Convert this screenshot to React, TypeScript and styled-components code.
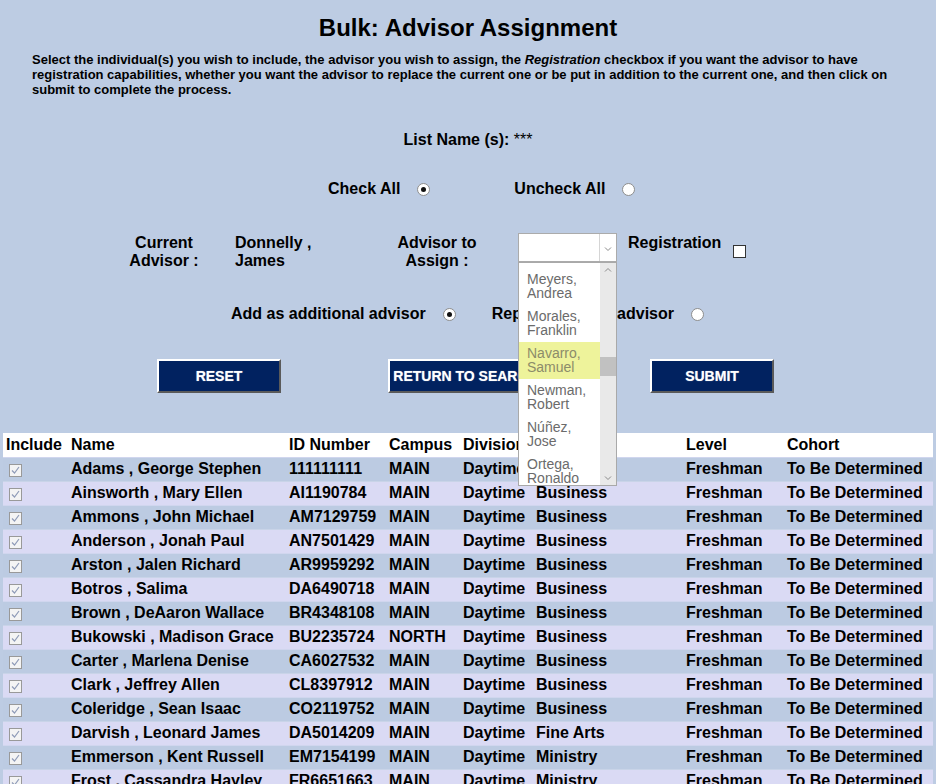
import styled, { createGlobalStyle } from "styled-components";

type Student = {
  name: string;
  id: string;
  campus: string;
  division: string;
  major: string;
  level: string;
  cohort: string;
};

const students: Student[] = [
  ["Adams , George Stephen", "111111111", "MAIN", "Business"],
  ["Ainsworth , Mary Ellen", "AI1190784", "MAIN", "Business"],
  ["Ammons , John Michael", "AM7129759", "MAIN", "Business"],
  ["Anderson , Jonah Paul", "AN7501429", "MAIN", "Business"],
  ["Arston , Jalen Richard", "AR9959292", "MAIN", "Business"],
  ["Botros , Salima", "DA6490718", "MAIN", "Business"],
  ["Brown , DeAaron Wallace", "BR4348108", "MAIN", "Business"],
  ["Bukowski , Madison Grace", "BU2235724", "NORTH", "Business"],
  ["Carter , Marlena Denise", "CA6027532", "MAIN", "Business"],
  ["Clark , Jeffrey Allen", "CL8397912", "MAIN", "Business"],
  ["Coleridge , Sean Isaac", "CO2119752", "MAIN", "Business"],
  ["Darvish , Leonard James", "DA5014209", "MAIN", "Fine Arts"],
  ["Emmerson , Kent Russell", "EM7154199", "MAIN", "Ministry"],
  ["Frost , Cassandra Hayley", "FR6651663", "MAIN", "Ministry"],
].map(([name, id, campus, major]) => ({
  name,
  id,
  campus,
  division: "Daytime",
  major,
  level: "Freshman",
  cohort: "To Be Determined",
}));

const advisors = [
  ["Meyers,", "Andrea"],
  ["Morales,", "Franklin"],
  ["Navarro,", "Samuel"],
  ["Newman,", "Robert"],
  ["Núñez,", "Jose"],
  ["Ortega,", "Ronaldo"],
];

const columns = [
  { label: "Include", width: 65 },
  { label: "Name", width: 218 },
  { label: "ID Number", width: 100 },
  { label: "Campus", width: 74 },
  { label: "Division", width: 73 },
  { label: "Major", width: 150 },
  { label: "Level", width: 101 },
  { label: "Cohort", width: 149 },
];

const GlobalStyle = createGlobalStyle`
  body {
    margin: 0;
    background: #bdcce3;
    font-family: "Liberation Sans", Arial, sans-serif;
    color: #000;
  }
`;

const Page = styled.div`
  width: 936px;
  overflow: hidden;
  padding-top: 14px;
`;

const Title = styled.h1`
  margin: 0;
  font-size: 24px;
  line-height: 28px;
  text-align: center;
`;

const Intro = styled.p`
  margin: 10px 0 0 32px;
  font-size: 13px;
  font-weight: bold;
  line-height: 15px;
  white-space: nowrap;

  em {
    font-style: italic;
  }
`;

const ListName = styled.div`
  margin-top: 34px;
  text-align: center;
  font-size: 16px;
  font-weight: bold;
  line-height: 18px;

  span {
    font-weight: normal;
  }
`;

const ChoiceRow = styled.div<{ $left: number; $gap: number; $top: number }>`
  display: flex;
  align-items: center;
  margin-top: ${(p) => p.$top}px;
  padding-left: ${(p) => p.$left}px;
  gap: ${(p) => p.$gap}px;
  height: 18px;
`;

const Choice = styled.label`
  display: flex;
  align-items: center;
  gap: 17px;
  font-size: 16px;
  font-weight: bold;
  white-space: nowrap;
`;

const Radio = styled.span<{ $on?: boolean }>`
  width: 11px;
  height: 11px;
  border: 1px solid #8d8d8d;
  border-radius: 50%;
  background: #fff;
  display: inline-flex;
  align-items: center;
  justify-content: center;

  &::after {
    content: "";
    width: 5px;
    height: 5px;
    border-radius: 50%;
    background: ${(p) => (p.$on ? "#111" : "transparent")};
  }
`;

const AdvisorRow = styled.div`
  display: flex;
  align-items: flex-start;
  margin-top: 36px;
  padding-left: 114px;
  font-size: 16px;
  font-weight: bold;
  line-height: 18px;
`;

const Cell = styled.div<{ $w: number; $center?: boolean; $ml?: number }>`
  width: ${(p) => p.$w}px;
  margin-left: ${(p) => p.$ml ?? 0}px;
  text-align: ${(p) => (p.$center ? "center" : "left")};
`;

const SelectWrap = styled.div`
  position: relative;
  margin-left: 24px;
  margin-top: -1px;
  width: 99px;
  z-index: 5;
`;

const SelectBox = styled.div`
  height: 27px;
  border: 1px solid #ababab;
  background: #fff;
  display: flex;
  justify-content: flex-end;
`;

const SelectArrow = styled.div`
  width: 16px;
  border-left: 1px solid #d5d5d5;
  display: flex;
  align-items: center;
  justify-content: center;
  padding-top: 4px;
`;

const OptionList = styled.div`
  position: absolute;
  top: 29px;
  left: 0;
  width: 97px;
  height: 222px;
  border: 1px solid #a9a9a9;
  background: #fff;
  display: flex;
  overflow: hidden;
`;

const Options = styled.div`
  flex: 1;
  padding-top: 5px;
`;

const OptionItem = styled.div<{ $active?: boolean }>`
  height: 37px;
  box-sizing: border-box;
  padding: 4px 0 0 8px;
  font-size: 14px;
  font-weight: normal;
  line-height: 14px;
  color: ${(p) => (p.$active ? "#8c8c6a" : "#6b6b6b")};
  background: ${(p) => (p.$active ? "#eef39b" : "transparent")};
`;

const ScrollTrack = styled.div`
  width: 16px;
  background: #e9e9e9;
  position: relative;
  display: flex;
  flex-direction: column;
  justify-content: space-between;
  align-items: center;
  padding: 4px 0;
  box-sizing: border-box;
`;

const ScrollThumb = styled.div`
  position: absolute;
  left: 0;
  right: 0;
  top: 94px;
  height: 19px;
  background: #c1c1c1;
`;

const RegCheck = styled.span`
  width: 11px;
  height: 11px;
  border: 1px solid #333;
  background: #fff;
  margin: 11px 0 0 13px;
`;

const ButtonRow = styled.div`
  display: flex;
  gap: 107px;
  padding-left: 157px;
  margin-top: 36px;
`;

const NavyButton = styled.button<{ $w: number }>`
  width: ${(p) => p.$w}px;
  height: 34px;
  background: #012260;
  color: #fff;
  font-family: "Liberation Sans", Arial, sans-serif;
  font-size: 14px;
  font-weight: bold;
  border: 2px solid;
  border-color: #fff #5a5a5a #5a5a5a #fff;
  text-shadow: 0 0 1px rgba(255, 255, 255, 0.6);
  padding: 0;
  white-space: nowrap;
`;

const Table = styled.table`
  margin: 40px 0 0 3px;
  border-collapse: collapse;
  table-layout: fixed;
  width: 930px;
  font-size: 16px;
  font-weight: bold;
`;

const HeadCell = styled.th`
  background: #fff;
  text-align: left;
  height: 24px;
  padding: 0 0 0 3px;
  font-weight: bold;
  white-space: nowrap;
  overflow: hidden;
`;

const Row = styled.tr<{ $alt: boolean }>`
  background: ${(p) => (p.$alt ? "#dadaf4" : "#bccbe2")};
  border-top: 1px solid ${(p) => (p.$alt ? "#c9d4e8" : "#d0d6ee")};
`;

const DataCell = styled.td`
  height: 21px;
  padding: 0 0 2px 3px;
  white-space: nowrap;
  overflow: hidden;
`;

const TickBox = styled.span`
  display: inline-flex;
  align-items: center;
  justify-content: center;
  width: 11px;
  height: 11px;
  margin: 4px 0 0 3px;
  border: 1px solid #999;
  background: #f4f4f4;
  vertical-align: top;
`;

const Chevron = ({ up }: { up?: boolean }) => (
  <svg width="8" height="5" viewBox="0 0 8 5">
    <path
      d={up ? "M1 4.5 L4 1.5 L7 4.5" : "M1 0.5 L4 3.5 L7 0.5"}
      fill="none"
      stroke="#8a8a8a"
      strokeWidth="1"
    />
  </svg>
);

const Tick = () => (
  <svg width="9" height="8" viewBox="0 0 9 8">
    <path d="M1 4.5 L3.5 7 L8 1" fill="none" stroke="#8f9bb8" strokeWidth="1.2" />
  </svg>
);

export default function App() {
  return (
    <Page>
      <GlobalStyle />
      <Title>Bulk: Advisor Assignment</Title>
      <Intro>
        Select the individual(s) you wish to include, the advisor you wish to assign, the{" "}
        <em>Registration</em> checkbox if you want the advisor to have
        <br />
        registration capabilities, whether you want the advisor to replace the current one or
        be put in addition to the current one, and then click on
        <br />
        submit to complete the process.
      </Intro>

      <ListName>
        List Name (s): <span>***</span>
      </ListName>

      <ChoiceRow $left={328} $gap={84} $top={31}>
        <Choice>
          Check All <Radio $on />
        </Choice>
        <Choice>
          Uncheck All <Radio />
        </Choice>
      </ChoiceRow>

      <AdvisorRow>
        <Cell $w={100} $center>
          Current
          <br />
          Advisor :
        </Cell>
        <Cell $w={145} $ml={21}>
          Donnelly ,
          <br />
          James
        </Cell>
        <Cell $w={114} $center>
          Advisor to
          <br />
          Assign :
        </Cell>
        <SelectWrap>
          <SelectBox>
            <SelectArrow>
              <Chevron />
            </SelectArrow>
          </SelectBox>
          <OptionList>
            <Options>
              {advisors.map(([last, first]) => (
                <OptionItem key={last} $active={last === "Navarro,"}>
                  {last}
                  <br />
                  {first}
                </OptionItem>
              ))}
            </Options>
            <ScrollTrack>
              <Chevron up />
              <ScrollThumb />
              <Chevron />
            </ScrollTrack>
          </OptionList>
        </SelectWrap>
        <Cell $w={92} $ml={11}>
          Registration
        </Cell>
        <RegCheck />
      </AdvisorRow>

      <ChoiceRow $left={231} $gap={36} $top={35}>
        <Choice>
          Add as additional advisor <Radio $on />
        </Choice>
        <Choice>
          Replace current advisor <Radio />
        </Choice>
      </ChoiceRow>

      <ButtonRow>
        <NavyButton $w={124}>RESET</NavyButton>
        <NavyButton $w={155}>RETURN TO SEARCH</NavyButton>
        <NavyButton $w={124}>SUBMIT</NavyButton>
      </ButtonRow>

      <Table>
        <colgroup>
          {columns.map((c) => (
            <col key={c.label} style={{ width: c.width }} />
          ))}
        </colgroup>
        <thead>
          <tr>
            {columns.map((c) => (
              <HeadCell key={c.label}>{c.label}</HeadCell>
            ))}
          </tr>
        </thead>
        <tbody>
          {students.map((s, i) => (
            <Row key={s.id} $alt={i % 2 === 1}>
              <DataCell>
                <TickBox>
                  <Tick />
                </TickBox>
              </DataCell>
              <DataCell>{s.name}</DataCell>
              <DataCell>{s.id}</DataCell>
              <DataCell>{s.campus}</DataCell>
              <DataCell>{s.division}</DataCell>
              <DataCell>{s.major}</DataCell>
              <DataCell>{s.level}</DataCell>
              <DataCell>{s.cohort}</DataCell>
            </Row>
          ))}
        </tbody>
      </Table>
    </Page>
  );
}
